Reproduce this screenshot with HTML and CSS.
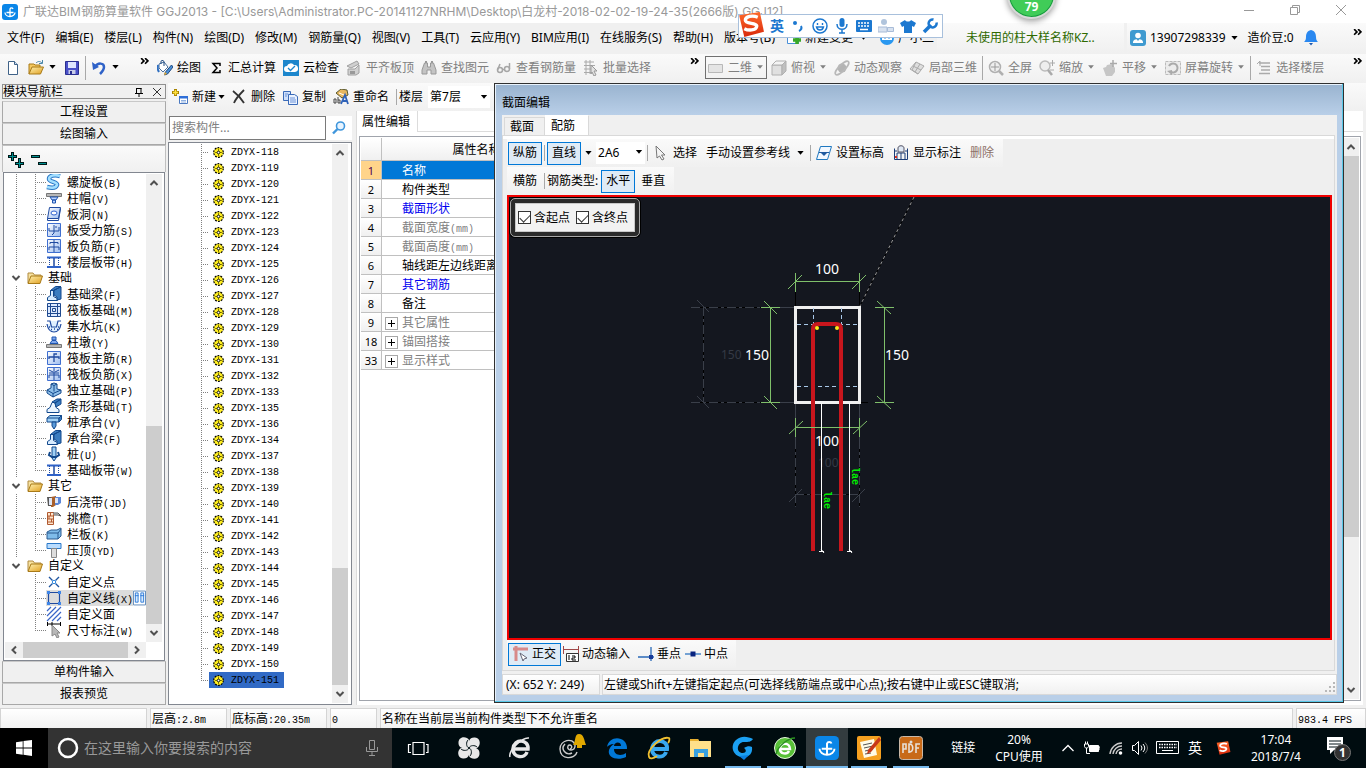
FILE: index.html
```html
<!DOCTYPE html>
<html lang="zh-CN">
<head>
  <meta charset="UTF-8">
  <meta name="viewport" content="width=device-width, initial-scale=1.0">
  <title>广联达BIM钢筋算量软件 GGJ2013</title>
  <link rel="stylesheet" href="styles.css">
</head>
<body>

  <!-- 图标库 -->
  <svg class="sprite" aria-hidden="true">
    <defs>
      <linearGradient id="g-blue" x1="0" y1="0" x2="1" y2="1"><stop offset="0" stop-color="#fff"/><stop offset="1" stop-color="#9dbdf0"/></linearGradient>
      <linearGradient id="g-folder" x1="0" y1="0" x2="1" y2="1"><stop offset="0" stop-color="#fff0b0"/><stop offset="1" stop-color="#e0a020"/></linearGradient>
      <linearGradient id="g-s" x1="0" y1="0" x2="0" y2="1"><stop offset="0" stop-color="#ff6a2a"/><stop offset="1" stop-color="#d8290c"/></linearGradient>
    </defs>
    <symbol id="i-caret" viewBox="0 0 7 4"><path d="M1 0h5L3.500 3z"/></symbol>
    <symbol id="i-more" viewBox="0 0 8 6"><path d="M1 0l2.500 2.500L1 5M4.500 0L7 2.500 4.500 5" fill="none" stroke="#000" stroke-width="1.500"/></symbol>
    <symbol id="i-logo" viewBox="0 0 16 16"><rect width="16" height="16" rx="3" fill="#0a86e8"/><path d="M8 13V5a1.600 1.600 0 0 1 3 0M3 8.500a5 4 0 0 0 10 0M4.500 8.500h7" fill="none" stroke="#fff" stroke-width="1.300"/></symbol>
    <symbol id="i-new" viewBox="0 0 16 16"><path d="M3.500 1.500h6l3 3v10h-9z" fill="#fff" stroke="#3f6288"/><path d="M9.500 1.500v3h3" fill="#cfe0f5" stroke="#3f6288"/></symbol>
    <symbol id="i-open" viewBox="0 0 16 16"><path d="M1 14V4h5l1 1h5v3" fill="#f5c860" stroke="#a87a18"/><path d="M1 14L4 7h11.500l-3 7z" fill="url(#g-folder)" stroke="#a87a18"/><path d="M8 3c2-2 4-2 6 0M14.500 0v3.500H11" fill="none" stroke="#4a86a8"/></symbol>
    <symbol id="i-save" viewBox="0 0 16 16"><path d="M1.500 1.500h13v13h-13z" fill="#4a50c8" stroke="#2a2f90"/><path d="M4 2h8v6H4z" fill="#dfe6ff"/><path d="M4.500 10h7v4h-7z" fill="#c8cde8"/><path d="M6 11h2v3H6z" fill="#2a2f90"/></symbol>
    <symbol id="i-undo" viewBox="0 0 16 16"><path d="M4 7c3-5 9-4 9 0 0 3-2 5-4 7" fill="none" stroke="#2f62c8" stroke-width="2.500"/><path d="M1 2l1 8 6-3z" fill="#2f62c8"/></symbol>
    <symbol id="i-draw" viewBox="0 0 16 16"><path d="M2 4l5-2 4 5-5 5-4-4z" fill="#fff" stroke="#4a6f9c"/><path d="M4 4V1.500C4 0 7 0 7 2v4" fill="none" stroke="#1f4a80"/><path d="M1 5c-1 4 0 5 1 7" fill="none" stroke="#2f6fc0" stroke-width="2"/><path d="M14.500 5l-6 7-1 3 3-1 5.500-7z" fill="#4a90d8" stroke="#1f4a80"/><path d="M8 12l2 2-3 1z" fill="#f0b030"/></symbol>
    <symbol id="i-sum" viewBox="0 0 16 16"><path d="M12 6V3.500H5L9 8l-4 4.500h7V10" fill="none" stroke="#000" stroke-width="1.500"/></symbol>
    <symbol id="i-cloud" viewBox="0 0 16 16"><rect width="16" height="16" fill="#1c86cc"/><path d="M4 12a3 3 0 0 1 0-6 4 4 0 0 1 7-1 3.500 3.500 0 0 1 1 7z" fill="#fff"/><path d="M5 8l2.500 2.500L12 6" fill="none" stroke="#1c86cc" stroke-width="1.300"/></symbol>
    <symbol id="i-align" viewBox="0 0 16 16"><path d="M1 6l10-5 2 3-8 4zM2 9h7l4-4v8l-3 2H2z" fill="#d0d0d0" stroke="#a0a0a0"/><path d="M4 11h5v3H4z" fill="#999"/></symbol>
    <symbol id="i-find" viewBox="0 0 16 16"><path d="M3.500 3h3v4h3V3h3l2.500 7v4h-5v-4h-4v4H1v-4z" fill="#c4c4c4" stroke="#999"/><path d="M4 1h2v2H4zM10 1h2v2h-2z" fill="#999"/></symbol>
    <symbol id="i-glasses" viewBox="0 0 16 16"><g fill="none" stroke="#a6a6a6" stroke-width="1.500"><circle cx="4" cy="10" r="2.500"/><circle cx="11" cy="9" r="2.500"/><path d="M1.500 10L4 4M6.500 9.500h2M13.500 9V3"/></g></symbol>
    <symbol id="i-batch" viewBox="0 0 16 16"><path d="M1 2h10M1 5.500h11M1 9h8M1 12.500h8M3 0v15M7 0v14" stroke="#aaa" fill="none"/><path d="M8 5l6 6h-3l2 4-2 1-2-4-1 2z" fill="#e2e2e2" stroke="#999"/></symbol>
    <symbol id="i-rect2d" viewBox="0 0 16 16"><path d="M.500 4.500h14v8H.500z" fill="#e4e4e4" stroke="#b8b8b8"/></symbol>
    <symbol id="i-cube" viewBox="0 0 16 16"><path d="M1 5h10v10H1z" fill="#e0e0e0" stroke="#b0b0b0"/><path d="M1 5l4-4h10L11 5z" fill="#f4f4f4" stroke="#b0b0b0"/><path d="M11 5l4-4v10l-4 4z" fill="#c0c0c0" stroke="#b0b0b0"/></symbol>
    <symbol id="i-orbit" viewBox="0 0 16 16"><circle cx="8" cy="8" r="4.500" fill="#b4b4b4"/><ellipse cx="8" cy="8" rx="9" ry="3" transform="rotate(-45 8 8)" fill="none" stroke="#b8b8b8" stroke-width="1.600"/></symbol>
    <symbol id="i-part" viewBox="0 0 16 16"><path d="M1 9l6-7 8 4-6 8z" fill="#dedede" stroke="#aaa"/><path d="M4 6l8 4M7 2L3 10l6 4M11 4L6 12" fill="none" stroke="#aaa"/></symbol>
    <symbol id="i-full" viewBox="0 0 16 16"><circle cx="7" cy="7" r="5.500" fill="#eee" stroke="#b0b0b0" stroke-width="1.500"/><path d="M7 3v8M3 7h8" stroke="#999"/><path d="M11 11l4 4" stroke="#b0b0b0" stroke-width="2.500"/></symbol>
    <symbol id="i-zoom" viewBox="0 0 16 16"><circle cx="6" cy="6" r="5" fill="#eee" stroke="#bbb" stroke-width="1.500"/><path d="M9 10l4 5" stroke="#aaa" stroke-width="2.500"/><path d="M11 3h5M13.500 0v6M11 10h4" stroke="#aaa"/></symbol>
    <symbol id="i-pan" viewBox="0 0 16 16"><path d="M1 8l3-1 1-2 5-1 3 4v4l-3 4H4z" fill="#c6c6c6"/><path d="M11 0v7M8 3.500h7" stroke="#aaa" stroke-width="1.500"/></symbol>
    <symbol id="i-rot" viewBox="0 0 16 16"><path d="M.500 1.500h15v13H.500z" fill="#ececec" stroke="#bbb" stroke-dasharray="3 1"/><path d="M4 6a4.500 4.500 0 1 1 2 6" fill="none" stroke="#aaa" stroke-width="2"/><path d="M2 11l5-1v5z" fill="#aaa"/></symbol>
    <symbol id="i-floor" viewBox="0 0 16 16"><path d="M3 3h11M5 6.500h9M5 10h9M3 13.500h11" stroke="#aaa" stroke-width="1.500"/><path d="M1 4l3-3v5" fill="none" stroke="#aaa"/></symbol>
    <symbol id="i-create" viewBox="0 0 16 16"><path d="M7.500 7.500h8v7h-8z" fill="#fff" stroke="#4a78c0"/><path d="M7 7h9v2.500H7z" fill="#2f6fd8"/><path d="M9 11.500h5M9 13h5" stroke="#8fb0e0"/><path d="M3.500 0v7M0 3.500h7" stroke="#a88400" stroke-width="3"/><path d="M3.500 1v5M1 3.500h5" stroke="#ffe040" stroke-width="1.500"/></symbol>
    <symbol id="i-x" viewBox="0 0 16 16"><path d="M2 2c4 3 8 7 11 12M13 1C9 5 5 9 3 14" fill="none" stroke="#333" stroke-width="1.800"/></symbol>
    <symbol id="i-copy" viewBox="0 0 16 16"><path d="M1.500 2.500h7v9h-7z" fill="#cfe0fa" stroke="#3a6ab8"/><path d="M6.500 5.500h6l3 2v8h-9z" fill="#eaf2ff" stroke="#3a6ab8"/><path d="M8 9h5M8 11h6M8 13h6M3 5h3M3 7h2" stroke="#6a92d8"/></symbol>
    <symbol id="i-rename" viewBox="0 0 16 16"><path d="M3 4l5-4 6 1 1 5-6 3z" fill="#e8b860" stroke="#5a5a30"/><path d="M6 4l5 2" stroke="#fff"/><path d="M1 10h2v4H1zM5 8v6h2v-3H5" fill="none" stroke="#444"/><path d="M8 15l4-9 3 9M10 12h4" fill="none" stroke="#2f62b8" stroke-width="1.800"/></symbol>
    <symbol id="i-search" viewBox="0 0 16 16"><circle cx="9.500" cy="6" r="4" fill="#e8f4ff" stroke="#3f96dc" stroke-width="1.600"/><path d="M6.500 9L2 13.500" stroke="#3f96dc" stroke-width="2.400"/></symbol>
    <symbol id="i-up" viewBox="0 0 10 10"><path d="M1.500 7L5 3.500 8.500 7" fill="none" stroke="#505050" stroke-width="2"/></symbol>
    <symbol id="i-gear" viewBox="0 0 11 11"><circle cx="5.500" cy="5.500" r="4.800" fill="#ffee20" stroke="#000" stroke-width="1.200" stroke-dasharray="1.900 1.100"/><path d="M5.500 2v2M5.500 7v2M2 5.500h2M7 5.500h2" stroke="#6a6200" stroke-width=".800"/><circle cx="5.500" cy="5.500" r="1.300" fill="#fff" stroke="#000" stroke-width=".900"/></symbol>
    <symbol id="i-folder" viewBox="0 0 16 16"><path d="M1 13V3h5l1.500 2H14v3" fill="#f7e2a0" stroke="#b08a40"/><path d="M1 13.500L4 6h11.500L13 13.500z" fill="url(#g-folder)" stroke="#a87a18"/></symbol>

    <!-- 构件图标 -->
    <symbol id="t-spiral" viewBox="0 0 16 16"><path d="M14 2C8 0 3 2 3 5s9 3 8 6-6 3-10 2" fill="none" stroke="#2a78c8" stroke-width="4.500"/><path d="M14 2C8 0 3 2 3 5s9 3 8 6-6 3-10 2" fill="none" stroke="#a4e0ff" stroke-width="2.500"/></symbol>
    <symbol id="t-cap" viewBox="0 0 16 16"><path d="M.500 3.500h15v3H.500z" fill="#b8b8b8" stroke="#777"/><path d="M4 7h8l-2 3H6zM6.500 10h3v3h-3z" fill="#bcd4ff" stroke="#1f55b0"/></symbol>
    <symbol id="t-hole" viewBox="0 0 16 16"><path d="M3.500 1.500h11l-2 11h-11z" fill="url(#g-blue)" stroke="#1f4aa0"/><path d="M1.500 12.500v2h11l2-12" fill="none" stroke="#1f4aa0"/><ellipse cx="8" cy="7" rx="3" ry="2" fill="#fff" stroke="#2f62d0"/></symbol>
    <symbol id="t-force" viewBox="0 0 16 16"><path d="M1.500 1.500h13v13h-13z" fill="url(#g-blue)" stroke="#3f6fd0"/><path d="M3 6v3h10V5M8 3v8l-2 2M10 6V4" fill="none" stroke="#1f4aa0"/></symbol>
    <symbol id="t-neg" viewBox="0 0 16 16"><path d="M1.500 1.500h13v13h-13z" fill="url(#g-blue)" stroke="#3f6fd0"/><path d="M4 6V4.500h8V6M3 12V9h10v3M8 2v12" fill="none" stroke="#1f4aa0"/></symbol>
    <symbol id="t-band" viewBox="0 0 16 16"><path d="M1 3.500h14M1 13h14" stroke="#2f62c8" stroke-width="2"/><path d="M8 4v8" stroke="#1f4aa0" stroke-width="1.500"/><path d="M3.500 4v8M12.500 4v8" stroke="#1f4aa0" stroke-dasharray="1 1"/></symbol>
    <symbol id="t-beam" viewBox="0 0 16 16"><path d="M1.500 14.500v-3l3-2v-5l3-1v7l4 2v2z" fill="#d8ecff" stroke="#12488c"/><path d="M4.500 4.500l5-4h5.500l-7 4zM15 1v12l-4 1V11L8 9V4z" fill="#3a7cc0" stroke="#12488c"/></symbol>
    <symbol id="t-raft" viewBox="0 0 16 16"><path d="M1.500 1.500h13v13h-13z" fill="#dceaff" stroke="#1f4a90"/><path d="M4.500 1v14M11.500 1v14M1 4.500h14M1 11.500h14M6.500 6.500h3v3h-3z" fill="none" stroke="#1f4a90"/></symbol>
    <symbol id="t-pit" viewBox="0 0 16 16"><path d="M1 3h3l1.500 6h5L12 3h3M1 6c1 6 4 8 7 8s6-2 7-8" fill="#dff0ff" stroke="#1f4aa0" stroke-width="1.200"/><path d="M3 9h1M5 11.500h1M8 11h1M11 11.500h1M12 9h1" stroke="#1f4aa0" stroke-width="1.500"/></symbol>
    <symbol id="t-pier" viewBox="0 0 16 16"><path d="M.500 10.500h15v3H.500z" fill="#b8b8b8" stroke="#777"/><path d="M6 3h4v3H6zM4 9.500l2-3h4l2 3z" fill="#7fa8ee" stroke="#1f55b0"/></symbol>
    <symbol id="t-main" viewBox="0 0 16 16"><path d="M1.500 1.500h13v13h-13z" fill="url(#g-blue)" stroke="#3f6fd0"/><path d="M3 9V7h10v2M8 12V4h3" fill="none" stroke="#1f4aa0" stroke-width="1.300"/></symbol>
    <symbol id="t-x" viewBox="0 0 16 16"><path d="M1.500 1.500h13v13h-13z" fill="url(#g-blue)" stroke="#3f6fd0"/><path d="M3 4l4 2M13 4l-4 2M3 12V9h10v3M8 2v12M3 7h10" fill="none" stroke="#1f4aa0"/></symbol>
    <symbol id="t-indep" viewBox="0 0 16 16"><path d="M1 8l4-2V2l3-1 3 1v5l4 1v3l-8 4-6-4z" fill="#8fc0ea" stroke="#12488c"/><path d="M5 2l3 1.500L11 2M8 3.500v6M1 8l6 3.500L15 8M7 11.500V15" fill="none" stroke="#12488c"/></symbol>
    <symbol id="t-strip" viewBox="0 0 16 16"><path d="M1 14.500h12v-3l-3-2-1-5H6l-2 5-3 2z" fill="#eaf5ff" stroke="#12488c"/><path d="M6 4l5-3h4L9 5zM15 1v5l-5 3-1-4z" fill="#3a7cc0" stroke="#12488c"/></symbol>
    <symbol id="t-pilecap" viewBox="0 0 16 16"><path d="M1 4l3-2.500h11.500L13 4v4H1z" fill="#9fd0f5" stroke="#12488c"/><path d="M1 4h12l2.500-2.500v4L13 8V4" fill="#3a7cc0" stroke="#12488c"/><path d="M6 8h4v4l-2 3-2-3z" fill="#5a9ad8" stroke="#12488c"/></symbol>
    <symbol id="t-pile" viewBox="0 0 16 16"><path d="M6 1h4v11l-2 3-2-3z" fill="#9fd0f5" stroke="#12488c"/><path d="M4 6l-1 3 3 2h4l3-2-1-3" fill="none" stroke="#12488c" stroke-width="2"/></symbol>
    <symbol id="t-post" viewBox="0 0 16 16"><path d="M1 3h4v9H2z" fill="#555"/><path d="M5 3l5-1v9l-3 2H5z" fill="#a8602c"/><path d="M9 3h6v6l-3 2H9z" fill="#5a86d8"/><path d="M3 4h3v7H3zM9 4h3v5H9z" fill="#dfe6f4"/></symbol>
    <symbol id="t-eave" viewBox="0 0 16 16"><path d="M1.500 2.500h6v12h-6z" fill="#ffe4cc" stroke="#b05a30"/><path d="M1 6h7M1 9h7M1 12h7M4.500 2v4M3 6v3M5.500 9v3" stroke="#b05a30"/><path d="M7 3h5l3 3-3-1H8" fill="#ddd" stroke="#555"/></symbol>
    <symbol id="t-rail" viewBox="0 0 16 16"><path d="M1 6l4-2h6l4-2v8l-3 3H1z" fill="#7fbcea" stroke="#2a5a90"/><path d="M1 7h11l3-4M12 7v6" fill="none" stroke="#2a5a90"/></symbol>
    <symbol id="t-top" viewBox="0 0 16 16"><path d="M1 1.500h14v5H1z" fill="#b8dcff" stroke="#2a78c8"/><path d="M5.500 6.500h5v9h-5z" fill="#ddd" stroke="#888"/></symbol>
    <symbol id="t-point" viewBox="0 0 16 16"><path d="M3 3l3.500 3.500M13 3L9.500 6.500M3 13l3.500-3.500M13 13L9.500 9.500" stroke="#1f55a0" stroke-width="1.400"/><circle cx="8" cy="8" r="1.700" fill="#fff" stroke="#2f8ae0"/></symbol>
    <symbol id="t-line" viewBox="0 0 16 16"><path d="M2.500 2.500h11v11h-11z" fill="none" stroke="#1f4aa0" stroke-width="1.200"/><path d="M1 1h3v3H1zM12 1h3v3h-3zM1 12h3v3H1zM12 12h3v3h-3z" fill="#3f86e8"/></symbol>
    <symbol id="t-face" viewBox="0 0 16 16"><path d="M1 5l4-4M1 10l9-9M1 15L15 1M6 15l9-9M11 15l4-4" stroke="#3a66c8" stroke-width="1.200"/></symbol>
    <symbol id="t-dim" viewBox="0 0 16 16"><path d="M1.500 0v4M14.500 0v4M2 2h12M6 0v4" stroke="#000"/><path d="M6 3l8 8h-3l2 4-2 1-2-4-3 2z" fill="#b8b8b8" stroke="#888"/></symbol>
  </svg>

  <!-- 标题栏 -->
  <header class="titlebar">
    <svg class="icon"><use href="#i-logo"/></svg>
    <h1 class="title-text">广联达BIM钢筋算量软件 GGJ2013 - [C:\Users\Administrator.PC-20141127NRHM\Desktop\白龙村-2018-02-02-19-24-35(2666版).GGJ12]</h1>
    <div class="win-buttons">
      <button aria-label="最小化"><svg viewBox="0 0 12 12"><path d="M1 6.500h10"/></svg></button>
      <button aria-label="还原"><svg viewBox="0 0 12 12"><path d="M1.500 3.500h7v7h-7zM3.500 3.500v-2h7v7h-2"/></svg></button>
      <button aria-label="关闭"><svg viewBox="0 0 12 12"><path d="M1 1l10 10M11 1L1 11"/></svg></button>
    </div>
  </header>
  <div class="ball">79</div>

  <!-- 菜单栏 -->
  <nav class="menubar">
    <div class="menu" id="menu"></div>
    <div class="menu-notice">未使用的柱大样名称KZ..</div>
    <div class="menu-user">
      <svg class="icon" viewBox="0 0 16 16"><rect width="16" height="16" rx="3" fill="#3f9ad0"/><circle cx="8" cy="5.500" r="2.800" fill="#fff"/><path d="M3 12c0-4 10-4 10 0v1H3z" fill="#fff"/><path d="M6.500 9h3L8 11z" fill="#3f9ad0"/></svg>
      <button class="tool">13907298339<svg class="caret"><use href="#i-caret"/></svg></button>
      <span>造价豆:0</span>
      <svg class="icon" viewBox="0 0 16 16"><path d="M8 0c4 1 5 4 5 7 0 3 1 4 2 5H1c1-1 2-2 2-5 0-3 1-6 5-7z" fill="#2a88f0"/><path d="M6 13h4l-2 2.500z" fill="#1f5ab0"/></svg>
      <svg class="more"><use href="#i-more"/></svg>
    </div>
  </nav>

  <!-- 输入法浮动条 -->
  <div class="ime">
    <svg class="ime-logo" viewBox="0 0 28 26"><path d="M3 4l20-3 4 19-19 5z" fill="url(#g-s)"/><path d="M21 6c-5-2-12-1-12 3s12 2 11 6c-1 4-8 4-12 2" fill="none" stroke="#fff" stroke-width="3.200"/></svg>
    <b>英</b>
    <svg viewBox="0 0 16 16"><circle cx="5" cy="5" r="2" fill="#1c78d0"/><path d="M11 8c1 2 0 4-2 5" fill="none" stroke="#1c78d0" stroke-width="2"/></svg>
    <svg viewBox="0 0 16 16"><circle cx="8" cy="8" r="7" fill="none" stroke="#1c78d0" stroke-width="1.500"/><path d="M5.500 5v2M10.500 5v2M4.500 9c1 4 6 4 7 0z" fill="none" stroke="#1c78d0" stroke-width="1.400"/></svg>
    <svg viewBox="0 0 16 16"><rect x="5.500" y="0" width="5" height="9" rx="2.500" fill="#1c78d0"/><path d="M3 6c0 7 10 7 10 0M8 11v4M5 15h6" fill="none" stroke="#1c78d0" stroke-width="1.500"/></svg>
    <svg viewBox="0 0 16 16"><rect y="2" width="16" height="12" rx="1" fill="#1c78d0"/><path d="M2 5h12M2 8h12" stroke="#fff" stroke-width="1.500" stroke-dasharray="2 1"/><path d="M4 11.500h8" stroke="#fff" stroke-width="1.500"/></svg>
    <svg viewBox="0 0 16 16"><circle cx="6" cy="4" r="3" fill="#b0c4dc"/><path d="M0 14V9h9v5zM9.500 9.500h6v4h-6z" fill="#d8e2f0" stroke="#a8bcd8"/></svg>
    <svg viewBox="0 0 16 16"><path d="M5 2c1 2 5 2 6 0l5 3-2 4-2-1v7H4V8L2 9 0 5z" fill="#1c78d0"/></svg>
    <svg viewBox="0 0 16 16"><path d="M2 14l7-7" stroke="#1c78d0" stroke-width="3.500"/><path d="M14.500 4.500a4 4 0 1 1-3-3" fill="none" stroke="#1c78d0" stroke-width="2.500"/></svg>
  </div>

  <!-- 主工具栏 -->
  <div class="toolbars">
    <div class="bar bar-file">
      <button class="tool" aria-label="新建"><svg class="icon"><use href="#i-new"/></svg></button>
      <button class="tool" aria-label="打开"><svg class="icon"><use href="#i-open"/></svg><svg class="caret"><use href="#i-caret"/></svg></button>
      <button class="tool" aria-label="保存"><svg class="icon"><use href="#i-save"/></svg></button>
      <i class="sep"></i>
      <button class="tool" aria-label="撤销"><svg class="icon"><use href="#i-undo"/></svg><svg class="caret"><use href="#i-caret"/></svg></button>
      <svg class="more"><use href="#i-more"/></svg>
    </div>
    <div class="bar bar-draw">
      <button class="tool"><svg class="icon"><use href="#i-draw"/></svg>绘图</button>
      <button class="tool"><svg class="icon"><use href="#i-sum"/></svg>汇总计算</button>
      <button class="tool"><svg class="icon"><use href="#i-cloud"/></svg>云检查</button>
      <button class="tool" disabled><svg class="icon"><use href="#i-align"/></svg>平齐板顶</button>
      <button class="tool" disabled><svg class="icon"><use href="#i-find"/></svg>查找图元</button>
      <button class="tool" disabled><svg class="icon"><use href="#i-glasses"/></svg>查看钢筋量</button>
      <button class="tool" disabled><svg class="icon"><use href="#i-batch"/></svg>批量选择</button>
      <svg class="more"><use href="#i-more"/></svg>
    </div>
    <div class="bar bar-view">
      <button class="tool framed" disabled><svg class="icon"><use href="#i-rect2d"/></svg>二维<svg class="caret"><use href="#i-caret"/></svg></button>
      <button class="tool" disabled><svg class="icon"><use href="#i-cube"/></svg>俯视<svg class="caret"><use href="#i-caret"/></svg></button>
      <button class="tool" disabled><svg class="icon"><use href="#i-orbit"/></svg>动态观察</button>
      <button class="tool" disabled><svg class="icon"><use href="#i-part"/></svg>局部三维</button>
      <i class="sep"></i>
      <button class="tool" disabled><svg class="icon"><use href="#i-full"/></svg>全屏</button>
      <button class="tool" disabled><svg class="icon"><use href="#i-zoom"/></svg>缩放<svg class="caret"><use href="#i-caret"/></svg></button>
      <button class="tool" disabled><svg class="icon"><use href="#i-pan"/></svg>平移<svg class="caret"><use href="#i-caret"/></svg></button>
      <button class="tool" disabled><svg class="icon"><use href="#i-rot"/></svg>屏幕旋转<svg class="caret"><use href="#i-caret"/></svg></button>
      <i class="sep"></i>
      <button class="tool" disabled><svg class="icon"><use href="#i-floor"/></svg>选择楼层</button>
      <svg class="more"><use href="#i-more"/></svg>
    </div>
  </div>

  <main class="workspace">

    <!-- 模块导航栏 -->
    <aside class="nav">
      <div class="nav-title">
        <span>模块导航栏</span>
        <svg viewBox="0 0 10 10"><path d="M2.500 1v5M7 1v5M2.500 1.500h5M1 6.500h8M5 7v3" stroke="#000" fill="none"/></svg>
        <svg viewBox="0 0 10 10"><path d="M1 1l8 8M9 1L1 9" stroke="#333"/></svg>
      </div>
      <button class="nav-button">工程设置</button>
      <button class="nav-button">绘图输入</button>
      <div class="nav-tools">
        <svg viewBox="0 0 40 16"><g fill="none" stroke="#001818" stroke-width="3"><path d="M4.500 0v9M0 4.500h9M11.500 6v10M7 11.500h9M23 4.500h9M30 11.500h9"/></g><g fill="none" stroke="#009090"><path d="M4.500 1v7M1 4.500h7M11.500 7v8M8 11.500h7M24 4.500h7M31 11.500h7"/></g></svg>
      </div>
      <div class="nav-frame">
        <div class="nav-body">
          <ul class="tree" id="module-tree"></ul>
          <div class="vscroll nav-scroll"><svg class="arrow"><use href="#i-up"/></svg><i class="before"></i><i class="thumb"></i><i class="after"></i><svg class="arrow down"><use href="#i-up"/></svg></div>
        </div>
        <div class="hscroll"><svg class="arrow left"><use href="#i-up"/></svg><i class="thumb"></i><svg class="arrow right"><use href="#i-up"/></svg></div>
      </div>
      <button class="nav-button">单构件输入</button>
      <button class="nav-button">报表预览</button>
    </aside>

    <section class="content">
      <div class="bar bar-comp">
        <button class="tool"><svg class="icon"><use href="#i-create"/></svg>新建<svg class="caret"><use href="#i-caret"/></svg></button>
        <button class="tool"><svg class="icon"><use href="#i-x"/></svg>删除</button>
        <button class="tool"><svg class="icon"><use href="#i-copy"/></svg>复制</button>
        <button class="tool"><svg class="icon"><use href="#i-rename"/></svg>重命名</button>
        <i class="sep"></i>
        <label for="floor">楼层</label>
        <span class="combo combo-floor"><select id="floor"><option>第7层</option></select><svg class="caret"><use href="#i-caret"/></svg></span>
      </div>
      <div class="panes">
        <!-- 构件列表 -->
        <div class="comp">
          <div class="search">
            <input type="text" placeholder="搜索构件..." aria-label="搜索构件">
            <button aria-label="搜索"><svg class="icon"><use href="#i-search"/></svg></button>
          </div>
          <div class="comp-frame">
            <ul class="comp-list" id="comp-list"></ul>
            <div class="vscroll comp-scroll"><svg class="arrow"><use href="#i-up"/></svg><i class="before"></i><i class="thumb"></i><i class="after"></i><svg class="arrow down"><use href="#i-up"/></svg></div>
          </div>
        </div>
        <!-- 属性编辑 -->
        <div class="props">
          <div class="props-tabs"><button class="props-tab">属性编辑</button></div>
          <div class="props-frame">
            <table class="props-table">
              <thead><tr><th class="num"></th><th class="name">属性名称</th><th></th></tr></thead>
              <tbody id="props-body"></tbody>
            </table>
            <div class="vscroll props-scroll"><svg class="arrow"><use href="#i-up"/></svg><i class="before"></i><i class="thumb"></i><i class="after"></i><svg class="arrow down"><use href="#i-up"/></svg></div>
          </div>
        </div>
      </div>
    </section>
  </main>

  <!-- 截面编辑窗口 -->
  <section class="dialog">
    <h2 class="dialog-title">截面编辑</h2>
    <div class="dialog-inner">
      <div class="tabs"><button class="tab">截面</button><button class="tab active">配筋</button></div>
      <div class="tab-page">
        <div class="dbar">
          <button class="dtool on">纵筋</button>
          <i class="sep"></i>
          <button class="dtool on">直线</button>
          <svg class="caret"><use href="#i-caret"/></svg>
          <span class="combo combo-bar"><select aria-label="钢筋信息"><option>2A6</option></select><svg class="caret"><use href="#i-caret"/></svg></span>
          <i class="sep"></i>
          <button class="dtool"><svg class="icon" viewBox="0 0 16 16"><path d="M3 1l9 9H8.500l2.500 4-2 1-2.500-4L4 13z" fill="#f4f4f4" stroke="#777"/></svg>选择</button>
          <button class="dtool">手动设置参考线<svg class="caret"><use href="#i-caret"/></svg></button>
          <i class="sep"></i>
          <button class="dtool"><svg class="icon" viewBox="0 0 16 16"><path d="M4.500 1.500h11l-4 13H.500z" fill="#f2f8ff" stroke="#1f78c0"/><path d="M3 7.500h10" stroke="#1f5aa0"/><path d="M5 8h6l-3 3z" fill="#1f5aa0"/></svg>设置标高</button>
          <button class="dtool"><svg class="icon" viewBox="0 0 16 16"><path d="M1.500 3.500v11h13v-11M1 6h3M12 6h3M4 14V8h8v6M8 8v7" fill="none" stroke="#1a3c78"/><path d="M5 3c0-3 6-3 6 0v4H5z" fill="#dfe8f4" stroke="#556"/><path d="M2 11h2v2H2z" fill="#e03020"/></svg>显示标注</button>
          <button class="dtool muted" disabled>删除</button>
        </div>
        <div class="dbar">
          <button class="dtool flat">横筋</button>
          <i class="sep"></i>
          <span>钢筋类型:</span>
          <button class="dtool on">水平</button>
          <button class="dtool">垂直</button>
        </div>
        <div class="canvas">
          <svg class="drawing">
            <g transform="translate(-509 -197)" fill="none">
              <!-- 参考线 -->
              <g stroke="#000"><path d="M914 197L860 306M691 307.500H795M703.500 307V402M691 402.500H868M795.500 292V306M859.500 292V306M795.500 404V507M859.500 404V507M795 494.500H860"/></g>
              <path d="M914 197L860 306" stroke="#9a9a9a" stroke-dasharray="3 3"/>
              <g stroke="#3a3f49"><path d="M691 307.500H795M703.500 307V402M691 402.500H795M795 494.500H860M795.500 440V507M859.500 440V507" stroke-dasharray="9 3 3 3"/><path d="M770 307.500H795M770 402.500H795M795.500 404V440M859.500 404V440M697 300l12 12M697 396l12 12M789 502l13-13M852 502l13-13"/></g>
              <!-- 截面轮廓 -->
              <path d="M795.500 307.500h64v95h-64z" stroke="#f0f0f0" stroke-width="3"/>
              <path d="M797 324.500h63M797 386.500h63M813.500 308v16M841.500 308v16" stroke="#a8c8e8" stroke-dasharray="4 3"/>
              <g class="dim-faint"><text x="721" y="359">150</text><text x="818" y="467">100</text></g>
              <!-- 纵筋 -->
              <path d="M813 551V329q0-5 5-5h18q5 0 5 5V551" stroke="#c8161d" stroke-width="4"/>
              <circle cx="817" cy="328" r="2" fill="#ffe81a"/><circle cx="837" cy="328" r="2" fill="#ffe81a"/>
              <!-- 尺寸标注 -->
              <path d="M795 281.500H860M795.500 273V292M859.500 273V292M788 289l14-14M852 289l14-14M770.500 307V403M761 307.500H780M761 402.500H780M764 301l13 13M764 396l13 13M884.500 307V403M875 307.500H894M875 402.500H894M877 301l14 13M877 396l14 13M795 427.500H860M795.500 418V437M859.500 418V437M789 434l14-13M853 434l14-13" stroke="#7fbf6a"/>
              <path d="M821.500 403V552M849.500 403V552M819 551.500h5M847 551.500h5M821 549l3 4M849 549l3 4" stroke="#fff"/>
              <g class="dim-text"><text x="815" y="274">100</text><text x="745" y="360">150</text><text x="885" y="360">150</text><text x="815" y="446">100</text></g>
              <g class="lae"><text transform="translate(824 491) rotate(90)">lae</text><text transform="translate(852 467) rotate(90)">lae</text></g>
            </g>
          </svg>
          <div class="ends">
            <div class="ends-inner">
              <label><input type="checkbox" checked>含起点</label>
              <label><input type="checkbox" checked>含终点</label>
            </div>
          </div>
        </div>
        <div class="dbar dbar-bottom">
          <button class="dtool on"><svg class="icon" viewBox="0 0 16 16"><path d="M0 3h15M3 0v15" stroke="#d88a8a" stroke-width="3"/><path d="M7 7l7 5-3 1-1 2z" fill="#fff" stroke="#667"/></svg>正交</button>
          <button class="dtool plain"><svg class="icon" viewBox="0 0 16 16"><path d="M.500 0v8M15.500 0v8M1 3.500h14" stroke="#a04848"/><path d="M3.500 7.500h12v8h-12z" fill="#fff" stroke="#333"/><path d="M6 9v5M9 10h3v2H9v2h4" fill="none" stroke="#000"/></svg>动态输入</button>
          <button class="dtool plain second"><svg class="icon" viewBox="0 0 16 16"><path d="M0 11h16M13 1v14" stroke="#2a6ab8" stroke-width="1.300"/><path d="M11 9h4v4h-4z" fill="#1a3c98"/></svg>垂点</button>
          <button class="dtool plain"><svg class="icon" viewBox="0 0 16 16"><path d="M0 8h16" stroke="#4a86c8" stroke-width="1.500"/><path d="M5.500 5.500h5v5h-5z" fill="#0a2480"/></svg>中点</button>
        </div>
      </div>
      <div class="dstatus"><span class="dcell coord">(X: 652 Y: 249)</span><span class="dcell hint">左键或Shift+左键指定起点(可选择线筋端点或中心点);按右键中止或ESC键取消;</span>
        <svg class="grip" viewBox="0 0 12 12"><path d="M9 1h2v2H9zM5 5h2v2H5zM9 5h2v2H9zM1 9h2v2H1zM5 9h2v2H5zM9 9h2v2H9z" fill="#b8b8b8"/></svg>
      </div>
    </div>
  </section>

  <!-- 状态栏 -->
  <footer class="status">
    <span class="cell c-empty"></span>
    <span class="cell c-height">层高<tt>:2.8m</tt></span>
    <span class="cell c-level">底标高<tt>:20.35m</tt></span>
    <span class="cell c-count"><tt>0</tt></span>
    <span class="cell c-msg">名称在当前层当前构件类型下不允许重名</span>
    <span class="cell c-fps"><tt>983.4 FPS</tt></span>
  </footer>

  <!-- 任务栏 -->
  <div class="taskbar">
    <button class="start" aria-label="开始"><svg viewBox="0 0 16 16"><path d="M0 2.200l6.700-1v6.300H0zM7.500 1.100L16 0v7.500H7.500zM0 8.400h6.700v6.300l-6.700-1zM7.500 8.400H16V16l-8.500-1.200z" fill="#fff"/></svg></button>
    <label class="cortana">
      <svg viewBox="0 0 22 22"><circle cx="11" cy="11" r="9" fill="none" stroke="#fff" stroke-width="2.500"/></svg>
      <input type="text" placeholder="在这里输入你要搜索的内容">
      <svg class="mic" viewBox="0 0 12 16"><path d="M3.500.500h5v9h-5zM.500 7v4.500h11V7M6 12v3.500M3 15.500h6" fill="none" stroke="#999"/></svg>
    </label>
    <div class="apps">
      <button class="app wide" aria-label="任务视图"><svg viewBox="0 0 24 24"><path d="M7 6.500h11v12H7zM5 8.500H2.500v8H5M20 8.500h2v8h-2" fill="none" stroke="#fff" stroke-width="1.200"/></svg></button>
      <button class="app wide" aria-label="浏览器"><svg viewBox="0 0 24 24"><g fill="#e8e8e8"><path d="M11.500 12C6 13 1 12 1.500 6S10 0 12 4s0 6-.500 8z"/><path d="M12 11.500C11 6 12 1 18 1.500S24 10 20 12s-6 0-8-.500z"/><path d="M12.500 12c5.500-1 10.500 0 10 6s-8.500 6-10.500 2 0-6 .500-8z"/><path d="M12 12.500c1 5.500 0 10.500-6 10S0 14 4 12s6 0 8 .500z"/></g><path d="M12 12C9 11 9 6 11 4M12 12c1-3 6-3 8-1M12 12c3 1 3 6 1 8M12 12c-1 3-6 3-8 1" fill="none" stroke="#001014"/></svg></button>
      <button class="app wide" aria-label="IE"><svg viewBox="0 0 24 24"><path d="M5 13h15c1-10-14-11-15 0 0 9 12 10 14 3" fill="none" stroke="#e8e8e8" stroke-width="3.500"/><path d="M2 21C0 15 14 1 21 2" fill="none" stroke="#e8e8e8" stroke-width="1.500"/></svg></button>
      <button class="app wide" aria-label="提醒"><svg viewBox="0 0 24 24"><path d="M11 13a2 2 0 1 0-2-3c-2 5 8 6 7-1C14 1 1 4 1 13c0 11 15 11 17 3M6 8c-5 5 1 12 7 9" fill="none" stroke="#ccc" stroke-width="1.400"/><path d="M20-2c5 0 5 6 7 11H14c3-3 1-11 6-11zM18 9h5v3h-5z" fill="#e0a800"/></svg></button>
      <button class="app" aria-label="Edge"><svg viewBox="0 0 24 24"><path d="M2 11C4-2 23 0 22 13H9c0 7 8 7 12 4v4C13 25 2 22 4 14c1-3 3-5 5-6-4 0-6 2-7 3zM9 10h7c0-5-7-4-7 0z" fill="#0078d7"/></svg></button>
      <button class="app" aria-label="Internet Explorer"><svg viewBox="0 0 24 24"><path d="M5 13h15c1-10-14-11-15 0 0 9 12 10 14 3" fill="none" stroke="#38a8f0" stroke-width="4"/><path d="M2 21C-1 14 14 0 22 2c1 1 0 4-1 5M2 21c1 2 4 2 8-1" fill="none" stroke="#f0c030" stroke-width="1.800"/></svg></button>
      <button class="app" aria-label="资源管理器"><svg viewBox="0 0 24 24"><path d="M1 3h8l1 2h12v16H1z" fill="#ffe08a"/><path d="M1 3h8l1 2H1z" fill="#e8b030"/><path d="M5 21v-8h14v8h-4v-4H9v4z" fill="#38a0e0"/></svg></button>
      <button class="app open" aria-label="广联达"><svg viewBox="0 0 24 24"><path d="M22 3c-2 3-5 3-8 3-8-1-10 11-2 11 3 0 4-3 1-5 3-2 6-2 8-1 1 7-4 11-10 10C1 20-1 9 5 4s12-3 17-1z" fill="#1ba0f2"/><path d="M8 20l5 4 5-5z" fill="#0a80e0"/></svg></button>
      <button class="app open" aria-label="360浏览器"><svg viewBox="0 0 24 24"><circle cx="12" cy="12" r="10.500" fill="#58c038" stroke="#e8f8e0"/><path d="M7 13h10c0-7-10-7-10 0 0 5 7 6 9 2" fill="none" stroke="#fff" stroke-width="2.500"/><path d="M3 18C5 10 15 2 22 2" fill="none" stroke="#2a9020" stroke-width="1.500"/></svg></button>
      <button class="app open current" aria-label="钢筋算量"><svg><use href="#i-logo"/></svg></button>
      <button class="app open" aria-label="记事本"><svg viewBox="0 0 24 24"><rect width="24" height="24" rx="2" fill="#f5a020"/><path d="M3 6l14-3 3 16-13 3z" fill="#fffbe8"/><path d="M6 9l9-2M7 12l9-2M8 15l8-2M8 18l6-1" stroke="#555"/><path d="M22 1L11 14l-1 4 4-2L24 4z" fill="#c83818"/></svg></button>
      <button class="app open" aria-label="PDF"><svg viewBox="0 0 24 24"><rect x=".500" y=".500" width="23" height="23" rx="3" fill="#c86a18" stroke="#c8b8a8"/><path d="M4 17V8h3v5H4M10 17V8c5 0 5 8 0 8zM17 17V8h4M17 12h3" fill="none" stroke="#e8e0d8" stroke-width="1.600"/><circle cx="12" cy="6" r="1.500" fill="#ddd"/></svg></button>
    </div>
    <div class="tray">
      <span>链接</span>
      <span class="two-line cpu">20%<br>CPU使用</span>
      <svg class="chev" viewBox="0 0 16 16"><path d="M2.500 11L8 5.500 13.500 11" fill="none" stroke="#fff" stroke-width="1.300"/></svg>
      <svg viewBox="0 0 16 16"><path d="M5.500 5.500h9v6h-9z" fill="#fff" stroke="#fff"/><path d="M15 7h1v3M.500 4h4v2.500c0 2-4 2-4 0zM1.500 4V1.500M3.500 4V1.500M2.500 8v5.500H6" fill="none" stroke="#fff"/></svg>
      <svg viewBox="0 0 16 16"><path d="M2 14A12 12 0 0 1 14 3M5 14a9 9 0 0 1 9-8M8 14a6 6 0 0 1 6-5" fill="none" stroke="#ccc" stroke-width="1.400"/><circle cx="12.500" cy="13" r="1.800" fill="#fff"/></svg>
      <svg viewBox="0 0 16 16"><path d="M.500 5.500h2l4-4v13l-4-4h-2z" fill="none" stroke="#fff"/><path d="M9 5.500q2 2.500 0 5M11 4q3.500 4 0 8" fill="none" stroke="#fff"/><path d="M13 2.500q5 5.500 0 11" fill="none" stroke="#777"/></svg>
      <svg class="kbd" viewBox="0 0 24 16"><path d="M.500 1.500h22v12H.500z" fill="none" stroke="#fff"/><path d="M3 4.500h18M3 7.500h18" stroke="#fff" stroke-width="1.500" stroke-dasharray="1.500 1"/><path d="M6 10.500h11" stroke="#fff"/></svg>
      <span class="lang">英</span>
      <svg viewBox="0 0 28 26"><path d="M3 4l20-3 4 19-19 5z" fill="url(#g-s)"/><path d="M21 6c-5-2-12-1-12 3s12 2 11 6c-1 4-8 4-12 2" fill="none" stroke="#fff" stroke-width="3.200"/></svg>
      <time class="two-line clock">17:04<br>2018/7/4</time>
      <span class="notice"><svg viewBox="0 0 26 26"><path d="M2 2h16v13H9l-4 4v-4H2z" fill="#fff"/><path d="M4 6h12M4 9h12M4 12h8" stroke="#001014"/><circle cx="17.500" cy="17.500" r="8" fill="#333" stroke="#777"/></svg><b>1</b></span>
    </div>
  </div>

  <script src="app.js"></script>
</body>
</html>
```

FILE: styles.css
```css
* {
  box-sizing: border-box;
}

body, html {
  margin: 0;
  padding: 0;
  height: 100%;
}

body {
  position: relative;
  display: flex;
  flex-direction: column;
  overflow: hidden;
  background: #f0f0f0;
  color: #000;
  font-family: "Noto Sans", "Noto Sans CJK SC", sans-serif;
  font-size: 12px;
  line-height: 16px;
}

button, input, select {
  margin: 0;
  padding: 0;
  border: none;
  background: none;
  color: inherit;
  font: inherit;
}

ul {
  list-style: none;
  margin: 0;
  padding: 0;
}

/* 等宽英文数字 */
tt {
  font-family: "Liberation Mono", monospace;
  font-size: 10px;
  line-height: 10px;
}

.sprite {
  position: absolute;
  width: 0;
  height: 0;
}

.icon {
  flex: none;
  width: 16px;
  height: 16px;
}

.caret {
  flex: none;
  width: 9px;
  height: 5px;
  fill: currentColor;
}

.more {
  flex: none;
  width: 9px;
  height: 7px;
  margin-left: auto;
  margin-bottom: 12px;
}

.sep {
  flex: none;
  width: 1px;
  height: 16px;
  background: #a8a8a8;
}

/* 标题栏 */
.titlebar {
  flex: none;
  display: flex;
  align-items: center;
  gap: 5px;
  height: 23px;
  padding-left: 2px;
  background: #fff;
}

.title-text {
  margin: 0;
  font-family: Inter, "Noto Sans CJK SC", sans-serif;
  font-size: 12px;
  font-weight: normal;
  color: #999;
  white-space: nowrap;
}

.win-buttons {
  display: flex;
  margin-left: auto;
  padding-right: 2px;
}

.win-buttons button {
  width: 46px;
  height: 20px;
}

.win-buttons svg {
  width: 12px;
  height: 12px;
  fill: none;
  stroke: #999;
}

.ball {
  position: absolute;
  left: 1007px;
  top: -30px;
  width: 49px;
  height: 49px;
  padding-top: 27px;
  border: 2px solid #d8d8d8;
  border-radius: 50%;
  background: #40cc58;
  box-shadow: inset 0 0 0 1px #189840, 0 2px 6px rgba(0, 0, 0, 0.4);
  color: #fff;
  font-weight: bold;
  text-align: center;
  line-height: 16px;
}

/* 菜单栏 */
.menubar {
  flex: none;
  display: flex;
  height: 31px;
  padding-bottom: 1px;
  gap: 3px;
}

.menu {
  display: flex;
  align-items: center;
  gap: 11px;
  width: 934px;
  padding-left: 7px;
  white-space: nowrap;
  overflow: hidden;
}

.menu-item {
  display: flex;
  align-items: center;
  gap: 3px;
}

.menu-item .caret {
  margin-left: 3px;
}

.menu-notice,
.menu-user {
  display: flex;
  align-items: center;
  background: linear-gradient(#fafafa, #f0f0f0);
}

.menu-notice {
  width: 187px;
  padding-left: 29px;
  color: #2f6a00;
}

.menu-user {
  flex: 1;
  gap: 9px;
  padding: 0 4px 0 3px;
}

.menu-user .icon + .tool {
  margin-left: -5px;
}

/* 输入法浮动条 */
.ime {
  position: absolute;
  left: 738px;
  top: 14px;
  display: flex;
  align-items: center;
  gap: 6px;
  height: 24px;
  padding: 0 4px 0 31px;
  border: 1px solid #a8c0dc;
  background: #fff;
}

.ime b {
  font-size: 14px;
  color: #1c78d0;
}

.ime svg {
  width: 16px;
  height: 16px;
}

.ime .ime-logo {
  position: absolute;
  left: -3px;
  top: -4px;
  width: 29px;
  height: 27px;
}

/* 工具栏 */
.toolbars {
  flex: none;
  display: flex;
  height: 29px;
}

.bar {
  display: flex;
  align-items: center;
  gap: 7px;
  background: linear-gradient(#fafafa, #f0f0f0);
  white-space: nowrap;
}

.bar .sep {
  height: 24px;
  margin: 0 -2px;
}

.tool {
  display: flex;
  align-items: center;
  gap: 4px;
}

.tool:disabled {
  color: #808080;
}

.bar-file {
  width: 152px;
  padding: 0 3px 2px 5px;
}

.bar-draw {
  width: 552px;
  padding: 0 5px 2px;
}

.bar-view {
  flex: 1;
  gap: 7px;
  padding: 0 4px 2px 1px;
}

.bar-view .caret {
  width: 8px;
}

.framed {
  height: 23px;
  padding: 0 2px;
  border: 1px solid #707070;
  margin-right: -3px;
}

/* 工作区 */
.workspace {
  flex: 1;
  min-height: 0;
  display: flex;
}

.nav {
  flex: none;
  display: flex;
  flex-direction: column;
  width: 166px;
  padding: 1px 0 1px 2px;
}

.nav-title {
  display: flex;
  align-items: center;
  gap: 8px;
  height: 15px;
  margin-bottom: 2px;
  padding-right: 3px;
  border: 1px solid #909090;
}

.nav-title span {
  flex: 1;
  line-height: 13px;
}

.nav-title svg {
  width: 10px;
  height: 10px;
}

.nav-button {
  flex: none;
  height: 22px;
  border: 1px solid #a8a8a8;
  border-top-color: #c8c8c8;
  background: #f0f0f0;
}

.nav-tools {
  flex: none;
  height: 27px;
  padding: 6px 5px;
  border: 1px solid #c0c0c0;
  border-bottom: none;
  background: linear-gradient(#fafafa, #f0f0f0);
}

.nav-tools svg {
  display: block;
  width: 40px;
  height: 16px;
}

.nav-frame {
  flex: 1;
  min-height: 0;
  display: flex;
  flex-direction: column;
  margin: 0 1px;
  padding: 1px 2px 2px 1px;
  border: 1px solid #828790;
  background: #fff;
}

.nav-body {
  flex: 1;
  min-height: 0;
  display: flex;
}

.tree {
  flex: 1;
  min-width: 0;
  overflow: hidden;
  white-space: nowrap;
}

.row {
  display: flex;
  align-items: center;
  height: 16px;
}

.row-leaf {
  padding-left: 11px;
}

.row-group {
  padding-left: 6px;
}

.row-group .chev {
  width: 10px;
  height: 10px;
  margin-right: 3px;
  transform: rotate(180deg);
}

.row-group .icon {
  margin: 0 5px 0 3px;
}

/* 虚线连接 */
.rail {
  flex: none;
  align-self: flex-start;
  width: 19px;
  height: 16px;
}

.rail.line {
  background: linear-gradient(#808080 1px, transparent 1px) 0 0 / 1px 2px repeat-y;
}

.branch {
  flex: none;
  align-self: flex-start;
  width: 11px;
  height: 16px;
  background:
    linear-gradient(#808080 1px, transparent 1px) 0 0 / 1px 2px repeat-y,
    linear-gradient(90deg, #808080 1px, transparent 1px) 0 8px / 2px 1px repeat-x;
}

.last .branch {
  height: 9px;
}

.leaf-body {
  display: flex;
  align-items: center;
  gap: 5px;
  height: 16px;
}

.row span span,
.comp-item tt {
  padding-top: 2px;
}

.leaf-body.selected {
  background: #dcdcdc;
}

.leaf-flag {
  width: 14px;
  height: 16px;
}

/* 滚动条 */
.vscroll {
  flex: none;
  display: flex;
  flex-direction: column;
  width: 16px;
  background: #f0f0f0;
}

.vscroll .arrow {
  flex: none;
  width: 10px;
  height: 10px;
  margin: 4px 3px;
}

.arrow.down {
  transform: rotate(180deg);
}

.arrow.left {
  transform: rotate(-90deg);
}

.arrow.right {
  transform: rotate(90deg);
}

.thumb {
  background: #cdcdcd;
}

.nav-scroll .before {
  flex: 235;
}

.nav-scroll .thumb {
  flex: 199;
}

.comp-scroll .before {
  flex: 407;
}

.comp-scroll .thumb {
  flex: 117;
}

.props-scroll .thumb {
  flex: 384;
}

.props-scroll .after {
  flex: 145;
}

.hscroll {
  flex: none;
  display: flex;
  align-items: center;
  height: 16px;
  margin-right: 16px;
  background: #f0f0f0;
}

.hscroll .arrow {
  width: 10px;
  height: 10px;
  margin: 0 4px;
}

.hscroll .thumb {
  flex: 1;
  height: 16px;
}

/* 右侧内容 */
.content {
  flex: 1;
  min-width: 0;
  display: flex;
  flex-direction: column;
  padding-left: 2px;
}

.bar-comp {
  flex: none;
  height: 28px;
  padding-left: 4px;
}

.bar-comp .tool .caret {
  margin: 0 -2px 0 -3px;
}

.bar-comp .sep {
  height: 16px;
  margin: 0 -5px 0 0;
}

.combo {
  display: flex;
  align-items: center;
  height: 22px;
  background: #fff;
}

.combo select {
  flex: 1;
  min-width: 0;
  appearance: none;
}

.combo .caret {
  width: 12px;
  height: 5px;
}

.combo-floor {
  width: 62px;
  padding-left: 2px;
  margin-left: -2px;
}

.panes {
  flex: 1;
  min-height: 0;
  display: flex;
  gap: 4px;
}

.comp {
  flex: none;
  display: flex;
  flex-direction: column;
  width: 184px;
  padding: 5px 0 1px;
}

.search {
  display: flex;
  height: 26px;
  padding-left: 1px;
}

.search input {
  flex: 1;
  min-width: 0;
  height: 24px;
  padding: 0 2px 2px;
  border: 1px solid #7a7a7a;
  background: #fff;
}

.search input::placeholder {
  color: #808080;
  opacity: 1;
}

.search button {
  width: 26px;
  height: 24px;
  padding-top: 4px;
  background: #fff;
}

.comp-frame {
  flex: 1;
  min-height: 0;
  display: flex;
  padding: 1px 3px 1px 0;
  border: 1px solid #828790;
  background: #fff;
}

.comp-list {
  flex: 1;
  overflow: hidden;
}

.comp-list li {
  display: flex;
  align-items: center;
  height: 16px;
  padding-left: 32px;
}

.comp-list .branch {
  width: 8px;
}

.comp-item {
  display: flex;
  align-items: center;
  gap: 7px;
  height: 16px;
  padding: 0 5px 0 4px;
}

.comp-item svg {
  width: 11px;
  height: 11px;
}

.comp-item.selected {
  background: #316ac5;
}

/* 属性编辑 */
.props {
  flex: 1;
  min-width: 0;
  display: flex;
  flex-direction: column;
  background: #fff;
  border-left: 1px solid #dcdcdc;
  border-right: 3px solid #f0f0f0;
  margin-bottom: 1px;
}

.props-tabs {
  height: 21px;
  border-bottom: 1px solid #dcdcdc;
}

.props-tab {
  height: 21px;
  padding: 1px 7px 0 5px;
  border-right: 1px solid #dcdcdc;
  background: #fff;
}

.props-frame {
  flex: 1;
  min-height: 0;
  display: flex;
  align-items: stretch;
  margin: 4px 2px 4px 2px;
  padding: 1px;
  border: 1px solid #a0a4ac;
}

.props-table {
  flex: 1;
  align-self: flex-start;
  table-layout: fixed;
  border-collapse: separate;
  border-spacing: 0;
}

.props-table th,
.props-table td {
  height: 19px;
  padding: 0 0 0 20px;
  border-right: 1px solid #c0c0c0;
  border-bottom: 1px solid #c0c0c0;
  font-weight: normal;
  line-height: 17px;
}

.props-table th {
  height: 23px;
  padding: 0;
  background: linear-gradient(#fff, #f0f0f0);
}

.props-table th.num {
  width: 21px;
}

.props-table th.name {
  width: 190px;
}

.props-table td.num {
  padding: 0;
  background: linear-gradient(#fff, #f0f0f0);
  font-size: 11px;
  text-align: center;
}

.props-table td .expand {
  display: inline-flex;
  align-items: center;
  justify-content: center;
  width: 13px;
  height: 13px;
  margin: 0 4px 0 -17px;
  border: 1px solid #a8a8a8;
  vertical-align: middle;
}

.expand svg {
  width: 7px;
  height: 7px;
}

.props-table .link {
  color: #0000f0;
}

.props-table .gray {
  color: #808080;
}

.props-table .active td {
  background: #0078d7;
  color: #fff;
}

.props-table .active td.num {
  background: #ffd48a;
  color: #500050;
}

/* 截面编辑窗口 */
.dialog {
  position: absolute;
  left: 494px;
  right: 22px;
  top: 83px;
  bottom: 65px;
  display: flex;
  flex-direction: column;
  padding: 0 6px 7px 7px;
  border: 1px solid #303030;
  background: #b9cfe8;
  box-shadow: inset -1px -1px 0 #58c8e8, inset 1px 1px 0 #e8f2fc;
}

.dialog-title {
  margin: 1px -5px 0 -6px;
  padding: 10px 0 4px 6px;
  background: linear-gradient(#9ab4d0, #b9cfe8);
  font-size: 12px;
  font-weight: normal;
  line-height: 16px;
}

.dialog-inner {
  flex: 1;
  min-height: 0;
  display: flex;
  flex-direction: column;
  background: #f0f0f0;
}

.tabs {
  display: flex;
  align-items: flex-end;
  height: 20px;
  padding-left: 2px;
}

.tab {
  height: 18px;
  padding: 0 10px 0 5px;
  border: 1px solid #d9d9d9;
  border-bottom: none;
  line-height: 17px;
}

.tab.active {
  height: 21px;
  margin-bottom: -1px;
  padding: 0 13px 1px 6px;
  border-left: none;
  border-top-color: #fff;
  background: #fff;
}

.tab-page {
  flex: 1;
  min-height: 0;
  display: flex;
  flex-direction: column;
  margin-right: 2px;
  padding: 3px 2px 2px 4px;
  border: 1px solid #d9d9d9;
  background: linear-gradient(#fff 3px, #efefef 3px);
}

.dbar {
  flex: none;
  align-self: flex-start;
  display: flex;
  align-items: center;
  gap: 3px;
  height: 28px;
  padding: 0 6px 0 1px;
  background: linear-gradient(#fafafa, #f0f0f0);
  white-space: nowrap;
}

.dbar .sep {
  margin: 0 -1px;
}

.dtool {
  display: flex;
  align-items: center;
  gap: 4px;
  height: 23px;
  padding: 0 3px;
}

.dtool .caret {
  margin-left: 2px;
}

.dtool.on {
  padding: 0 4px;
  border: 1px solid #0078d7;
  background: #dfebf6;
}

.dtool.flat {
  padding: 0 5px;
}

.dtool.plain {
  padding: 0 2px;
}

.dtool.second {
  margin-left: 4px;
}

.dtool.muted {
  color: #8c7068;
}

.combo-bar {
  width: 49px;
  padding: 0 0 1px 2px;
}

.canvas {
  position: relative;
  flex: 1;
  min-height: 0;
  overflow: hidden;
  border: 2px solid #f00000;
  background: #14171f;
}

.drawing {
  display: block;
  width: 100%;
  height: 100%;
}

.dim-text,
.dim-faint {
  font-size: 14px;
  fill: #fff;
}

.dim-faint {
  font-size: 12px;
  fill: #353a45;
}

.lae {
  font-family: "Liberation Mono", monospace;
  font-size: 10px;
  font-weight: bold;
  fill: #00f000;
}

.ends {
  position: absolute;
  left: 1px;
  top: 1px;
  padding: 4px;
  border: 1px solid #a8a8a8;
  border-radius: 5px;
  background: #2a2a2a;
  box-shadow: 0 0 0 1px #000;
}

.ends-inner {
  display: flex;
  align-items: center;
  gap: 6px;
  height: 29px;
  padding: 0 6px 0 2px;
  border: 1px solid #c8c8c8;
  background: #f2f2f2;
}

.ends label {
  display: flex;
  align-items: center;
  gap: 3px;
}

.ends input {
  appearance: none;
  width: 13px;
  height: 13px;
  border: 1px solid #333;
  background: #fff;
}

.ends input:checked::before {
  content: "";
  display: block;
  width: 9px;
  height: 5px;
  margin: 2px 1px;
  border: solid #333;
  border-width: 0 0 1px 1px;
  transform: rotate(-45deg);
}

.dbar-bottom {
  gap: 0;
  height: 28px;
}

.dbar-bottom .dtool {
  gap: 3px;
}

.dstatus {
  position: relative;
  flex: none;
  display: flex;
  gap: 2px;
  height: 24px;
  padding-top: 3px;
}

.dcell {
  border: 1px solid #d9d9d9;
  background: linear-gradient(#fff, #f0f0f0);
  line-height: 19px;
}

.coord {
  width: 98px;
  padding-left: 3px;
}

.hint {
  flex: 1;
  padding-left: 1px;
}

.grip {
  position: absolute;
  right: 1px;
  bottom: 2px;
  width: 12px;
  height: 12px;
}

/* 状态栏 */
.status {
  flex: none;
  display: flex;
  gap: 3px;
  height: 22px;
  padding-top: 2px;
}

.cell {
  padding-left: 1px;
  border: 1px solid #d4d4d4;
  border-bottom: none;
  background: linear-gradient(#fff, #f2f2f2);
  line-height: 19px;
  white-space: nowrap;
}

.c-empty {
  width: 147px;
}

.c-height {
  width: 77px;
}

.c-level {
  width: 97px;
}

.c-count {
  width: 47px;
}

.c-msg {
  flex: 1;
}

.c-fps {
  width: 70px;
}

/* 任务栏 */
.taskbar {
  flex: none;
  display: flex;
  height: 40px;
  background: #000c10;
  color: #fff;
}

.start {
  width: 48px;
  background: #000;
}

.start svg {
  display: block;
  width: 16px;
  height: 16px;
  margin: 0 auto;
}

.cortana {
  display: flex;
  align-items: center;
  gap: 5px;
  width: 344px;
  padding: 0 14px 0 9px;
  background: #333;
}

.cortana svg {
  width: 22px;
  height: 22px;
}

.cortana .mic {
  width: 12px;
  height: 16px;
}

.cortana input {
  flex: 1;
  min-width: 0;
  font-size: 14px;
  line-height: 20px;
}

.cortana input::placeholder {
  color: #999;
  opacity: 1;
}

.apps {
  display: flex;
}

.app {
  width: 42px;
  padding: 2px 0 0;
  border-bottom: 2px solid transparent;
}

.app.wide {
  width: 51px;
}

.app svg {
  display: block;
  width: 24px;
  height: 24px;
  margin: 0 auto;
  overflow: visible;
}

.app.open {
  border-image: linear-gradient(90deg, transparent 5px, #76b9ed 5px, #76b9ed 37px, transparent 37px) 2;
}

.app.current {
  border-image: none;
  border-bottom-color: #76b9ed;
  background: #333c3f;
}

.tray {
  flex: 1;
  display: flex;
  align-items: center;
  justify-content: flex-end;
  gap: 8px;
  padding-right: 15px;
}

.tray svg {
  width: 16px;
  height: 16px;
}

.two-line {
  text-align: center;
  line-height: 17px;
}

.cpu {
  margin: 0 9px 0 12px;
}

.tray .kbd {
  width: 24px;
}

.lang {
  margin-right: 5px;
  font-size: 14px;
}

.clock {
  margin: 0 16px 0 12px;
}

.notice {
  position: relative;
}

.tray .notice svg {
  display: block;
  width: 26px;
  height: 26px;
}

.notice b {
  position: absolute;
  left: 14px;
  top: 10px;
}
```

FILE: app.js
```js
const icon = (id, cls = 'icon') => `<svg class="${cls}"><use href="#${id}"/></svg>`;

// 菜单
const menus = ['文件(F)', '编辑(E)', '楼层(L)', '构件(N)', '绘图(D)', '修改(M)', '钢筋量(Q)', '视图(V)', '工具(T)',
  '云应用(Y)', 'BIM应用(I)', '在线服务(S)', '帮助(H)', '版本号(B)'];
const newIcon = '<svg class="icon" viewBox="0 0 16 16"><path d="M1.500 2.500h11v11h-11z" fill="#fff" stroke="#4a90d8"/><path d="M11 6v8M7 10h8" stroke="#38a828" stroke-width="3.500"/></svg>';
const botIcon = '<svg class="icon" viewBox="0 0 16 16"><circle cx="8" cy="8" r="7" fill="#2a98f0"/><path d="M3 5h10v5H3z" fill="#fff"/><path d="M6 6v3M10 6v3" stroke="#2a98f0"/></svg>';
document.getElementById('menu').innerHTML =
  menus.map((m) => `<span class="menu-item">${m}</span>`).join('') +
  `<span class="menu-item">${newIcon}新建变更${icon('i-caret', 'caret')}</span>` +
  `<span class="menu-item">${botIcon}广小二</span>`;

// 模块树
const groups = [
  { rows: [['spiral', '螺旋板', 'B'], ['cap', '柱帽', 'V'], ['hole', '板洞', 'N'], ['force', '板受力筋', 'S'],
    ['neg', '板负筋', 'F'], ['band', '楼层板带', 'H']] },
  { name: '基础', rows: [['beam', '基础梁', 'F'], ['raft', '筏板基础', 'M'], ['pit', '集水坑', 'K'], ['pier', '柱墩', 'Y'],
    ['main', '筏板主筋', 'R'], ['x', '筏板负筋', 'X'], ['indep', '独立基础', 'P'], ['strip', '条形基础', 'T'],
    ['pilecap', '桩承台', 'V'], ['beam', '承台梁', 'F'], ['pile', '桩', 'U'], ['band', '基础板带', 'W']] },
  { name: '其它', rows: [['post', '后浇带', 'JD'], ['eave', '挑檐', 'T'], ['rail', '栏板', 'K'], ['top', '压顶', 'YD']] },
  { name: '自定义', rows: [['point', '自定义点'], ['line', '自定义线', 'X'], ['face', '自定义面'], ['dim', '尺寸标注', 'W']] },
];
const flag = '<svg class="leaf-flag" viewBox="0 0 14 16"><path d="M.500.500h13v15H.500z" fill="#fff" stroke="#5a86b8"/><path d="M2.500 2.500h3v10h-3zM8.500 2.500h3v10h-3zM2 5.500h4M8 5.500h4" fill="#d8ecff" stroke="#2a78d8"/></svg>';

let html = '';
groups.forEach((g, gi) => {
  if (g.name) {
    html += `<li class="row row-group">${icon('i-up', 'chev')}${icon('i-folder')}${g.name}</li>`;
  }
  const outer = gi < groups.length - 1 ? 'rail line' : 'rail';
  g.rows.forEach(([id, name, key], i) => {
    const selected = name === '自定义线';
    html += `<li class="row row-leaf${i === g.rows.length - 1 ? ' last' : ''}"><i class="${outer}"></i><i class="branch"></i>` +
      `<span class="leaf-body${selected ? ' selected' : ''}">${icon('t-' + id)}<span>${name}${key ? `<tt>(${key})</tt>` : ''}</span></span>` +
      `${selected ? flag : ''}</li>`;
  });
});
document.getElementById('module-tree').innerHTML = html;

// 构件列表，134 排在 136 之后
const numbers = [];
for (let n = 118; n <= 151; n++) {
  if (n !== 134) numbers.push(n);
  if (n === 136) numbers.push(134);
}
document.getElementById('comp-list').innerHTML = numbers.map((n) =>
  `<li class="${n === 151 ? 'last' : ''}"><i class="branch"></i><span class="comp-item${n === 151 ? ' selected' : ''}">${icon('i-gear', 'gear')}<tt>ZDYX-${n}</tt></span></li>`
).join('');

// 属性表
const props = [
  [1, '名称', 'active'], [2, '构件类型', ''], [3, '截面形状', 'link'], [4, '截面宽度<tt>(mm)</tt>', 'gray'],
  [5, '截面高度<tt>(mm)</tt>', 'gray'], [6, '轴线距左边线距离', ''], [7, '其它钢筋', 'link'], [8, '备注', ''],
  [9, '其它属性', 'gray', 1], [18, '锚固搭接', 'gray', 1], [33, '显示样式', 'gray', 1],
];
const plus = '<span class="expand"><svg viewBox="0 0 7 7"><path d="M0 3.500h7M3.500 0v7" stroke="#000"/></svg></span>';
document.getElementById('props-body').innerHTML = props.map(([n, name, cls, open]) =>
  `<tr class="${cls === 'active' ? cls : ''}"><td class="num">${n}</td><td class="${cls}">${open ? plus : ''}${name}</td><td></td></tr>`
).join('');
```
